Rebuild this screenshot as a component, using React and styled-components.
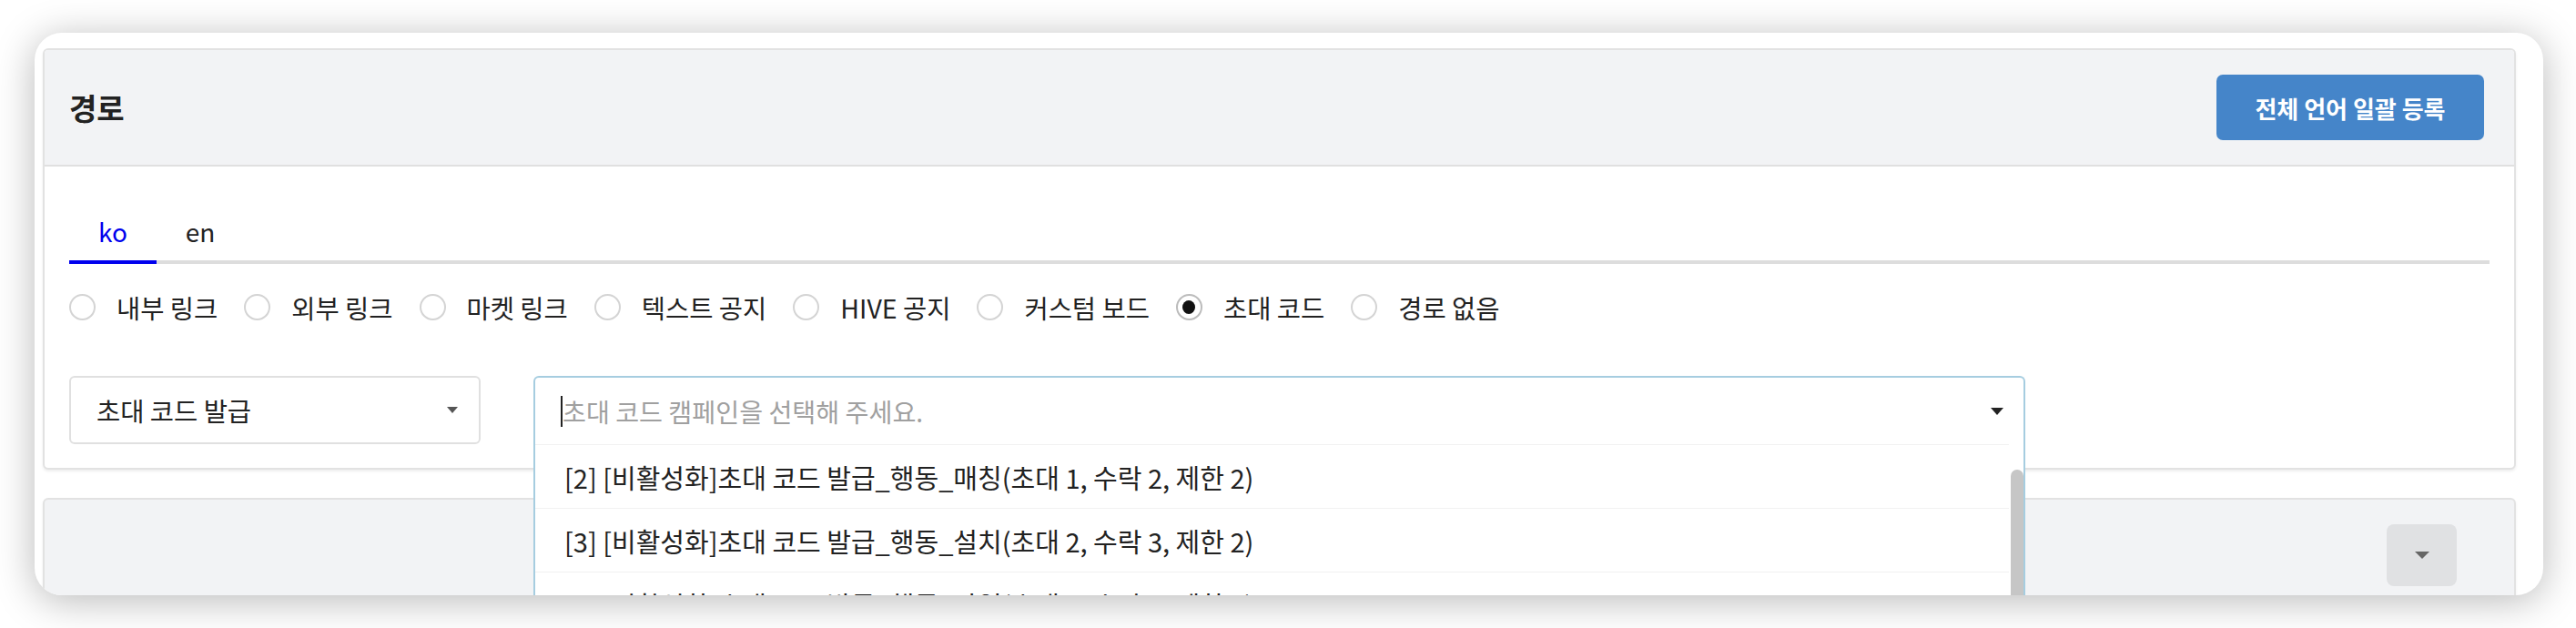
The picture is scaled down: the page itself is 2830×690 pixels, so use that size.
import React from "react";
import styled, { createGlobalStyle } from "styled-components";

const GlobalStyle = createGlobalStyle`
  html, body {
    margin: 0;
    padding: 0;
    background: #ffffff;
  }
  body {
    font-family: "Noto Sans CJK KR", "Noto Sans", sans-serif;
    color: #222;
  }
  * {
    box-sizing: border-box;
  }
`;

const Page = styled.div`
  height: 690px;
  padding: 36px 36px 0 38px;
  overflow: hidden;
  background: #fff;
`;

const Card = styled.div`
  height: 618px;
  background: #fff;
  border-radius: 30px;
  box-shadow: 0 6px 44px rgba(0, 0, 0, 0.28);
  overflow: hidden;
  padding: 17px 30px 0 9px;
  display: flex;
  flex-direction: column;
  gap: 31px;
`;

const Panel = styled.section`
  flex-shrink: 0;
  border: 2px solid #e2e2e2;
  border-radius: 6px;
  background: ${(p) => (p.$muted ? "#f2f3f5" : "#fff")};
  box-shadow: 0 2px 3px rgba(0, 0, 0, 0.07);
  height: ${(p) => (p.$height ? `${p.$height}px` : "auto")};
`;

const PanelHeader = styled.header`
  height: 128px;
  display: flex;
  align-items: center;
  justify-content: space-between;
  padding: 0 33px 0 27px;
  background: #f2f3f5;
  border-bottom: 2px solid #e0e0e0;
  border-radius: 4px 4px 0 0;
`;

const Title = styled.h2`
  margin: 0;
  font-size: 33px;
  font-weight: 700;
  color: #222;
`;

const PrimaryButton = styled.button`
  width: 294px;
  height: 72px;
  border: none;
  border-radius: 7px;
  background: #4585c9;
  color: #fff;
  font-family: inherit;
  font-size: 26px;
  font-weight: 700;
  cursor: pointer;
`;

const PanelBody = styled.div`
  padding: 51px 27px 26px;
`;

const Tabs = styled.div`
  display: flex;
  border-bottom: 4px solid #dddddd;
`;

const Tab = styled.div`
  width: 96px;
  text-align: center;
  font-size: 28px;
  line-height: 40px;
  padding-bottom: 12px;
  margin-bottom: -4px;
  color: ${(p) => (p.$active ? "#0000ee" : "#222")};
  border-bottom: 4px solid ${(p) => (p.$active ? "#0000ee" : "transparent")};
`;

const RadioRow = styled.div`
  display: flex;
  align-items: center;
  gap: 29px;
  margin-top: 27px;
  height: 40px;
`;

const RadioItem = styled.label`
  display: flex;
  align-items: center;
  gap: 23px;
  font-size: 28.5px;
  color: #222;
  white-space: nowrap;
`;

const RadioCircle = styled.span`
  width: 29px;
  height: 29px;
  border-radius: 50%;
  border: 2px solid ${(p) => (p.$checked ? "#bcbcbc" : "#d4d4d4")};
  display: flex;
  align-items: center;
  justify-content: center;

  &::after {
    content: "";
    width: 14px;
    height: 15px;
    border-radius: 50%;
    background: ${(p) => (p.$checked ? "#111" : "transparent")};
  }
`;

const SelectRow = styled.div`
  display: flex;
  align-items: flex-start;
  gap: 58px;
  margin-top: 56px;
`;

const Select = styled.div`
  width: 452px;
  height: 75px;
  border: 2px solid #e0e0e0;
  border-radius: 6px;
  display: flex;
  align-items: center;
  justify-content: space-between;
  padding: 0 23px 0 28px;
  font-size: 28.5px;
  color: #222;
  background: #fff;
`;

const Caret = styled.span`
  width: 0;
  height: 0;
  border-left: ${(p) => p.$w / 2}px solid transparent;
  border-right: ${(p) => p.$w / 2}px solid transparent;
  border-top: ${(p) => p.$h}px solid ${(p) => p.$color};
`;

const Combo = styled.div`
  position: relative;
  z-index: 3;
  width: 1639px;
  height: 75px;
  border: 2px solid #a6cde0;
  border-bottom: none;
  border-radius: 6px 6px 0 0;
  background: #fff;
  display: flex;
  align-items: center;
  justify-content: space-between;
  padding: 0 22px 0 28px;
`;

const InputText = styled.div`
  display: flex;
  align-items: center;
  font-size: 28.2px;
  color: #a0a0a0;
`;

const TextCursor = styled.span`
  width: 2px;
  height: 34px;
  background: #222;
`;

const Dropdown = styled.ul`
  position: absolute;
  top: 73px;
  left: -2px;
  right: -2px;
  height: 420px;
  margin: 0;
  padding: 0 16px 0 0;
  list-style: none;
  background: #fff;
  border: 2px solid #a6cde0;
  border-top: none;
`;

const Option = styled.li`
  height: 70px;
  border-top: 1px solid #f1f1f1;
  display: flex;
  align-items: center;
  padding-left: 32px;
  font-size: 29px;
  color: #222;
  white-space: nowrap;
`;

const ScrollThumb = styled.div`
  position: absolute;
  top: 28px;
  right: 0;
  width: 14px;
  height: 300px;
  border-radius: 7px;
  background: #c6c6c6;
`;

const SecondHeader = styled.div`
  display: flex;
  justify-content: flex-end;
  padding: 27px 63px 0 0;
`;

const ToggleButton = styled.button`
  width: 77px;
  height: 68px;
  border: none;
  border-radius: 8px;
  background: #e0e1e3;
  display: flex;
  align-items: center;
  justify-content: center;
`;

const radios = [
  "내부 링크",
  "외부 링크",
  "마켓 링크",
  "텍스트 공지",
  "HIVE 공지",
  "커스텀 보드",
  "초대 코드",
  "경로 없음",
];

const options = [
  "[2] [비활성화]초대 코드 발급_행동_매칭(초대 1, 수락 2, 제한 2)",
  "[3] [비활성화]초대 코드 발급_행동_설치(초대 2, 수락 3, 제한 2)",
  "[4] [비활성화]초대 코드 발급_행동_가입(초대 2, 수락 3, 제한 3)",
];

export default function App() {
  return (
    <>
      <GlobalStyle />
      <Page>
        <Card>
          <Panel>
            <PanelHeader>
              <Title>경로</Title>
              <PrimaryButton>전체 언어 일괄 등록</PrimaryButton>
            </PanelHeader>
            <PanelBody>
              <Tabs>
                <Tab $active>ko</Tab>
                <Tab>en</Tab>
              </Tabs>
              <RadioRow>
                {radios.map((r) => (
                  <RadioItem key={r}>
                    <RadioCircle $checked={r === "초대 코드"} />
                    {r}
                  </RadioItem>
                ))}
              </RadioRow>
              <SelectRow>
                <Select>
                  초대 코드 발급
                  <Caret $w={12} $h={7} $color="#555" />
                </Select>
                <Combo>
                  <InputText>
                    <TextCursor />
                    초대 코드 캠페인을 선택해 주세요.
                  </InputText>
                  <Caret $w={15} $h={8} $color="#222" />
                  <Dropdown>
                    {options.map((o) => (
                      <Option key={o}>{o}</Option>
                    ))}
                    <ScrollThumb />
                  </Dropdown>
                </Combo>
              </SelectRow>
            </PanelBody>
          </Panel>
          <Panel $muted $height={160}>
            <SecondHeader>
              <ToggleButton>
                <Caret $w={16} $h={8} $color="#666" />
              </ToggleButton>
            </SecondHeader>
          </Panel>
        </Card>
      </Page>
    </>
  );
}
